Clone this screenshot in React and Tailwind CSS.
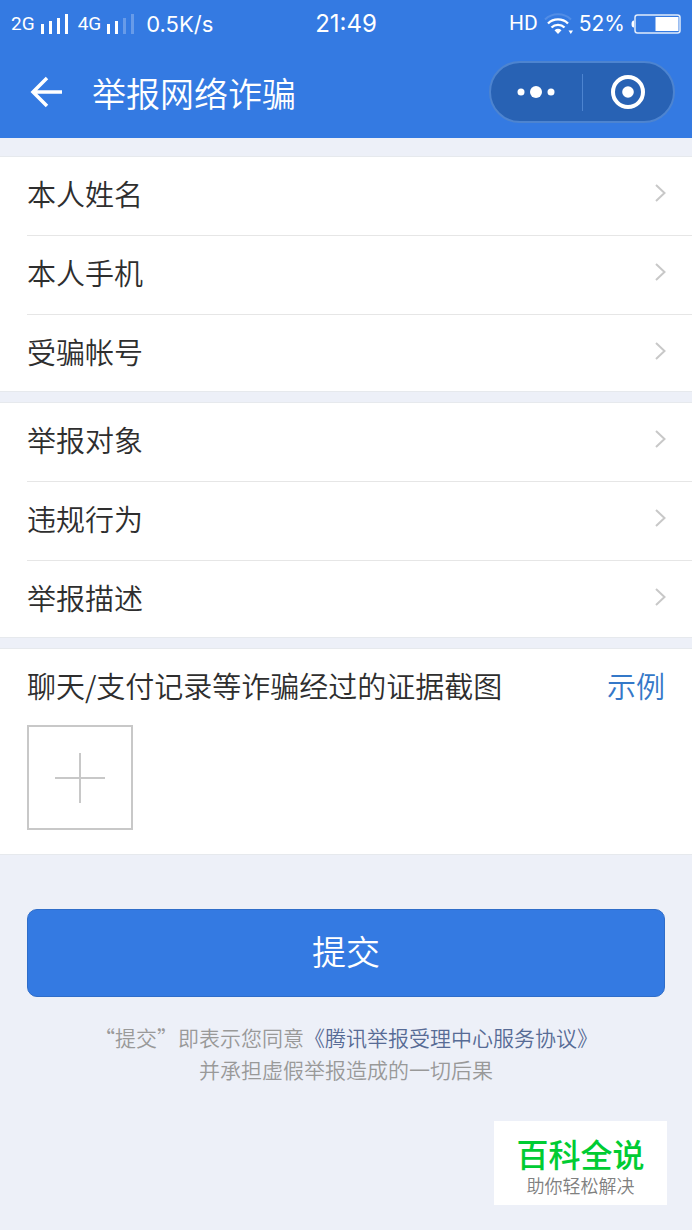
const personalRows = ["本人姓名", "本人手机", "受骗帐号"]
const reportRows = ["举报对象", "违规行为", "举报描述"]

const SignalBars = ({ active }) => (
  <svg viewBox="0 0 27 20" className="h-5 w-[27px]" fill="currentColor" aria-hidden="true">
    <rect x="0" y="10" width="3" height="10" />
    <rect x="8" y="7" width="3" height="13" />
    <rect x="16" y="4" width="3" height="16" opacity={active > 2 ? 1 : 0.25} />
    <rect x="24" y="0" width="3" height="20" opacity={active > 3 ? 1 : 0.25} />
  </svg>
)

const WifiIcon = () => (
  <svg viewBox="0 0 29 22" className="h-[22px] w-[29px]" fill="none" stroke="currentColor" aria-hidden="true">
    <path d="M1 6.5C8-.5 20-.5 27 6.5" strokeWidth="2" opacity="0.15" />
    <path d="M4 10.5C9.500 5 18.500 5 24 10.5" strokeWidth="2.400" />
    <path d="M7.500 14.500C11 11 17 11 20.500 14.500" strokeWidth="2.400" />
    <path d="M10.500 17.200Q14 14.500 17.500 17.200L14 21Z" fill="currentColor" stroke="none" />
    <path d="M24.500 17.500h4.500l-2.200 3.500Z" fill="currentColor" stroke="none" />
  </svg>
)

const BatteryIcon = () => (
  <svg viewBox="0 0 50 20" className="h-5 w-[50px]" fill="none" aria-hidden="true">
    <path d="M3 6.500Q.500 6.500 .500 10T3 13.500Z" fill="currentColor" />
    <rect x="4" y="1" width="45" height="18" rx="2.500" stroke="currentColor" strokeWidth="1.500" opacity="0.85" />
    <rect x="24.500" y="3" width="23" height="14" fill="currentColor" />
  </svg>
)

const StatusBar = () => (
  <div className="grid h-[46px] grid-cols-[1fr_auto_1fr] items-center pt-0.5 pr-[11px] pl-[11px] font-[Inter,sans-serif] text-[22px] font-normal">
    <div className="flex items-center">
      <span className="mr-1.5 font-[Roboto,sans-serif] text-[19px]">2G</span>
      <SignalBars active={4} />
      <span className="mr-1.5 ml-2.5 font-[Roboto,sans-serif] text-[19px]">4G</span>
      <SignalBars active={2} />
      <span className="ml-3">0.5K/s</span>
    </div>
    <span className="text-2xl">21:49</span>
    <div className="flex items-center justify-end">
      <span className="mr-1.5 font-[Roboto,sans-serif] text-[21px]">HD</span>
      <WifiIcon />
      <span className="mr-1.5 ml-1.5 text-[21px]">52%</span>
      <BatteryIcon />
    </div>
  </div>
)

const NavBar = () => (
  <div className="flex h-[92px] items-center pr-[17px] pl-[30px]">
    <button type="button" aria-label="返回">
      <svg viewBox="0 0 32 32" className="h-8 w-8" fill="none" stroke="currentColor" strokeWidth="3.500" aria-hidden="true">
        <path d="M17 2L3 16l14 14M3 16h29" />
      </svg>
    </button>
    <h1 className="ml-[30px] flex-1 pt-0.5 text-[34px] leading-10">举报网络诈骗</h1>
    <div className="flex h-[62px] w-[186px] items-center rounded-full border-2 border-[#4d84d0] bg-[#2862b4]">
      <button type="button" aria-label="更多" className="flex flex-1 justify-center">
        <svg viewBox="0 0 38 12" className="h-3 w-[38px]" fill="currentColor" aria-hidden="true">
          <circle cx="4" cy="6" r="3.500" />
          <circle cx="19" cy="6" r="6" />
          <circle cx="34" cy="6" r="3.500" />
        </svg>
      </button>
      <span className="h-[37px] w-px bg-[#4d84d0]" />
      <button type="button" aria-label="关闭" className="flex flex-1 justify-center">
        <svg viewBox="0 0 34 34" className="h-[34px] w-[34px]" fill="none" aria-hidden="true">
          <circle cx="17" cy="17" r="15" stroke="currentColor" strokeWidth="4" />
          <circle cx="17" cy="17" r="5.800" fill="currentColor" />
        </svg>
      </button>
    </div>
  </div>
)

const RowGroup = ({ rows }) => (
  <ul className="border-y border-[#e6e9ed] bg-white pl-[27px]">
    {rows.map((label) => (
      <li key={label} className="group border-b border-[#e6e6e6] last:border-b-0">
        <button
          type="button"
          className="flex w-full items-center justify-between pt-4 pr-[26px] pb-[22px] text-left text-[29px] leading-10 group-last:pb-5"
        >
          {label}
          <svg viewBox="0 0 11 18" className="h-[18px] w-[11px]" fill="none" stroke="#c8c8c8" strokeWidth="2" aria-hidden="true">
            <path d="M1 1l8.500 8L1 17" />
          </svg>
        </button>
      </li>
    ))}
  </ul>
)

export default function App() {
  return (
    <div className="flex min-h-screen flex-col bg-[#edf0f8] font-['Noto_Sans_CJK_SC',sans-serif] font-[350] text-[#2e2e2e]">
      <header className="bg-[#347ae2] text-white">
        <StatusBar />
        <NavBar />
      </header>

      <main className="flex flex-1 flex-col">
        <div className="flex flex-col gap-2.5 pt-[18px]">
          <RowGroup rows={personalRows} />
          <RowGroup rows={reportRows} />
          <section className="border-y border-[#e6e9ed] bg-white px-[27px] pt-4 pb-6">
            <div className="flex items-center justify-between text-[29px] leading-10">
              <h2>聊天/支付记录等诈骗经过的证据截图</h2>
              <a href="#example" className="text-[#3478c8]">
                示例
              </a>
            </div>
            <button
              type="button"
              aria-label="添加截图"
              className="mt-5 flex h-[105px] w-[106px] items-center justify-center border-2 border-[#c8c8c8]"
            >
              <svg viewBox="0 0 50 50" className="h-[50px] w-[50px]" stroke="#c8c8c8" strokeWidth="2" aria-hidden="true">
                <path d="M25 0v50M0 25h50" />
              </svg>
            </button>
          </section>
        </div>

        <div className="px-[27px] pt-[54px]">
          <button
            type="button"
            className="h-[88px] w-full rounded-[10px] border border-[#2f6dc9] bg-[#347ae2] pb-1.5 text-[34px] text-white"
          >
            提交
          </button>
          <p className="mt-6 text-center text-[21px] leading-8 text-[#999]">
            “提交”即表示您同意
            <a href="#agreement" className="text-[#576b95]">
              《腾讯举报受理中心服务协议》
            </a>
            <br />
            并承担虚假举报造成的一切后果
          </p>
        </div>

        <div className="mt-auto mr-[25px] mb-[25px] flex h-[84px] w-[173px] flex-col items-center self-end bg-white pt-3">
          <strong className="text-[32px] leading-10 font-medium text-[#0c3]">百科全说</strong>
          <span className="text-lg leading-6 text-[#808080]">助你轻松解决</span>
        </div>
      </main>
    </div>
  )
}
